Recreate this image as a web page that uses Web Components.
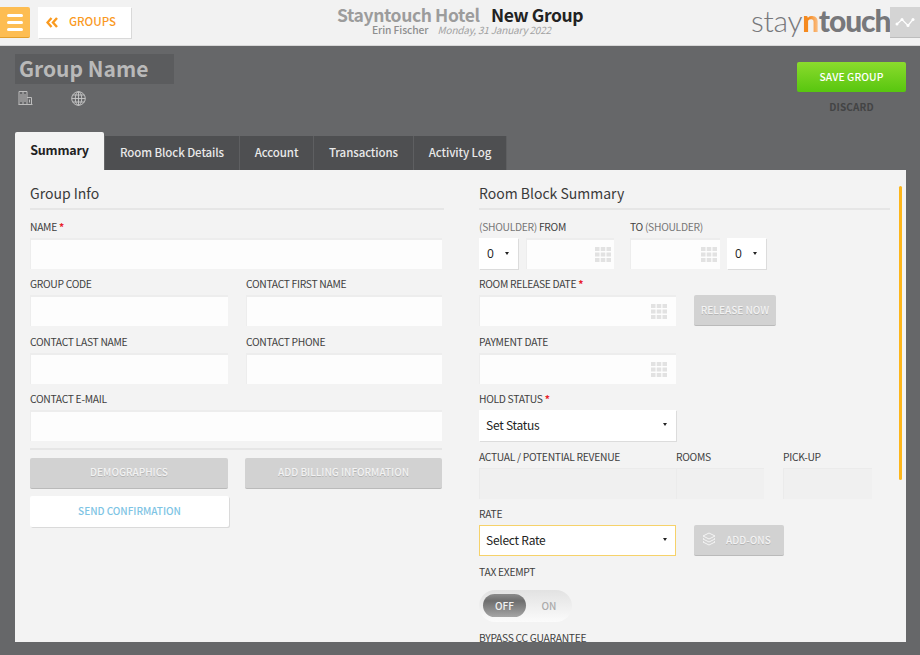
<!DOCTYPE html>
<html>
<head>
<meta charset="utf-8">
<title>New Group</title>
<style>
    html, body { margin: 0; height: 100%; overflow: hidden; }
    body {
        background: #666769;
        font-family: "Noto Sans CJK SC", "Noto Sans", sans-serif;
    }
</style>
</head>
<body>
<sn-header></sn-header>
<sn-group-head></sn-group-head>
<sn-tabs></sn-tabs>
<sn-panel>
    <sn-column slot="left" heading="Group Info">
        <sn-row cols="412px" gap="0">
            <sn-field label="NAME" required><sn-input></sn-input></sn-field>
        </sn-row>
        <sn-row cols="198px 196px" gap="18px">
            <sn-field label="GROUP CODE"><sn-input></sn-input></sn-field>
            <sn-field label="CONTACT FIRST NAME"><sn-input></sn-input></sn-field>
        </sn-row>
        <sn-row cols="198px 196px" gap="18px">
            <sn-field label="CONTACT LAST NAME"><sn-input></sn-input></sn-field>
            <sn-field label="CONTACT PHONE"><sn-input></sn-input></sn-field>
        </sn-row>
        <sn-row cols="412px" gap="0">
            <sn-field label="CONTACT E-MAIL"><sn-input></sn-input></sn-field>
        </sn-row>
        <sn-rule></sn-rule>
        <sn-row cols="198px 197px" gap="17px" class="tight">
            <sn-button kind="disabled">DEMOGRAPHICS</sn-button>
            <sn-button kind="disabled">ADD BILLING INFORMATION</sn-button>
        </sn-row>
        <sn-row cols="199px" gap="0">
            <sn-button kind="blue">SEND CONFIRMATION</sn-button>
        </sn-row>
    </sn-column>
    <sn-column slot="right" heading="Room Block Summary">
        <sn-row cols="127px 1fr" gap="24px">
            <sn-field><span slot="text"><i>(SHOULDER)</i> FROM</span>
                <sn-row cols="39px 88px" gap="8px"><sn-select small>0</sn-select><sn-input date near></sn-input></sn-row>
            </sn-field>
            <sn-field><span slot="text">TO <i>(SHOULDER)</i></span>
                <sn-row cols="90px 39px" gap="7px"><sn-input date near></sn-input><sn-select small>0</sn-select></sn-row>
            </sn-field>
        </sn-row>
        <sn-row cols="197px 82px" gap="18px">
            <sn-field label="ROOM RELEASE DATE" required><sn-input date></sn-input></sn-field>
            <sn-button kind="disabled" class="bottom">RELEASE NOW</sn-button>
        </sn-row>
        <sn-row cols="197px" gap="0">
            <sn-field label="PAYMENT DATE"><sn-input date></sn-input></sn-field>
        </sn-row>
        <sn-row cols="197px" gap="0">
            <sn-field label="HOLD STATUS" required><sn-select>Set Status</sn-select></sn-field>
        </sn-row>
        <sn-row cols="197px 88px 108px" gap="0">
            <sn-field label="ACTUAL / POTENTIAL REVENUE"><sn-input readonly></sn-input></sn-field>
            <sn-field label="ROOMS"><sn-input readonly></sn-input></sn-field>
            <sn-field label="PICK-UP" style="margin-left:19px"><sn-input readonly></sn-input></sn-field>
        </sn-row>
        <sn-row cols="197px 90px" gap="18px">
            <sn-field label="RATE"><sn-select highlight>Select Rate</sn-select></sn-field>
            <sn-button kind="disabled" class="bottom" layers>ADD-ONS</sn-button>
        </sn-row>
        <sn-field label="TAX EXEMPT"><sn-toggle></sn-toggle></sn-field>
        <sn-field label="BYPASS CC GUARANTEE" class="last"></sn-field>
    </sn-column>
</sn-panel>

<script>
const FONT = `"Noto Sans CJK SC", "Noto Sans", sans-serif`;

class SnHeader extends HTMLElement {
    constructor() {
        super();
        this.attachShadow({ mode: 'open' }).innerHTML = `
        <style>
            :host {
                display: flex;
                align-items: flex-start;
                height: 45px;
                background: #f2f2f2;
                border-bottom: 1px solid #d8d8d8;
                position: relative;
                font-family: ${FONT};
            }
            .burger {
                width: 30px; height: 30px; margin-top: 7px;
                background: #fdbd52;
                border-bottom: 1px solid #e39f2a;
                border-radius: 0 2px 2px 0;
                display: flex; flex-direction: column; justify-content: center; align-items: center; gap: 4px;
            }
            .burger span { width: 16px; height: 3px; border-radius: 2px; background: #fff; }
            .back {
                width: 93px; height: 31px; margin: 7px 0 0 8px;
                box-sizing: border-box;
                padding-bottom: 3px;
                background: #fff;
                box-shadow: 1px 1px 0 #d9d9d9;
                display: flex; align-items: center;
                color: #fa9a1f; font-size: 11.500px; font-weight: 500;
            }
            .back svg { margin: 2px 11px 0 8px; }
            .title {
                position: absolute; left: 337px; top: 3px;
                white-space: nowrap;
                line-height: 24px;
                font-size: 17.500px; font-weight: 700;
                color: #9c9c9c;
                letter-spacing: -.4px;
            }
            .title b { color: #222; margin-left: 8px; font-weight: 700; }
            .sub {
                position: absolute; left: 372px; top: 22px;
                white-space: nowrap; line-height: 15px;
                font-size: 10.300px; color: #8e8e8e; font-weight: 500;
                letter-spacing: -.1px;
            }
            .sub i { color: #a2a2a2; font-weight: 400; margin-left: 7px; font-size: 10px; letter-spacing: -.2px; }
            .logo {
                position: absolute; left: 751px; top: 0;
                font-family: "Lato", sans-serif;
                font-size: 30px; line-height: 40px;
                font-weight: 300; color: #77787b;
                white-space: nowrap;
                letter-spacing: -.3px;
            }
            .logo b { font-weight: 900; color: #77787b; letter-spacing: -1.100px; }
            .logo .n {
                font-weight: 900;
                background: linear-gradient(90deg, #f58a1f, #f58a1f 40%, #fbc592);
                -webkit-background-clip: text;
                background-clip: text;
                color: transparent;
            }
            .chart {
                position: absolute; right: 0; top: 7px;
                width: 30px; height: 30px;
                background: #d4d4d4;
                border-bottom: 1px solid #bdbdbd;
                display: flex; align-items: center; justify-content: center;
            }
        </style>
        <div class="burger"><span></span><span></span><span></span></div>
        <div class="back">
            <svg width="12" height="11" viewBox="0 0 12 11"><path d="M5.500 1 1.500 5.500 5.500 10M11 1 7 5.500 11 10" fill="none" stroke="#fa9a1f" stroke-width="2.400"/></svg>
            GROUPS
        </div>
        <div class="title">Stayntouch Hotel <b>New Group</b></div>
        <div class="sub">Erin Fischer <i>Monday, 31 January 2022</i></div>
        <div class="logo">stay<span class="n">n</span><b>touch</b></div>
        <div class="chart">
            <svg width="20" height="11" viewBox="0 0 20 11"><path d="M2 7 7 2.500l6 6 5-6" fill="none" stroke="#fff" stroke-width="1.200"/><g fill="#fff"><circle cx="2" cy="7" r="1.500"/><circle cx="7" cy="2.500" r="1.500"/><circle cx="13" cy="8.500" r="1.500"/><circle cx="18" cy="2.500" r="1.500"/></g></svg>
        </div>`;
    }
}

class SnGroupHead extends HTMLElement {
    constructor() {
        super();
        this.attachShadow({ mode: 'open' }).innerHTML = `
        <style>
            :host {
                display: flex;
                justify-content: space-between;
                height: 86px;
                padding: 8px 14px 0 15px;
                box-sizing: border-box;
                font-family: ${FONT};
            }
            .name {
                width: 159px; height: 30px; box-sizing: border-box;
                background: #5b5c5e;
                color: #b9b9b9;
                font-size: 21px; font-weight: 700; line-height: 29px;
                padding-left: 4px;
                white-space: nowrap;
            }
            .icons { display: flex; gap: 38px; margin: 7px 0 0 3px; }
            .actions { width: 109px; margin-top: 8px; }
            .save {
                height: 30px; border-radius: 2px; box-sizing: border-box;
                padding-bottom: 2px;
                background: linear-gradient(#8bdb2d, #58c60f);
                color: #fff; font-size: 10.300px; font-weight: 500; letter-spacing: .1px;
                display: flex; align-items: center; justify-content: center;
            }
            .discard {
                text-align: center; margin-top: 7px;
                color: #434445; font-size: 10px; font-weight: 700; line-height: 16px; letter-spacing: .1px;
            }
        </style>
        <div>
            <div class="name">Group Name</div>
            <div class="icons">
                <svg width="15" height="14" viewBox="0 0 15 14" fill="none" stroke="#bdbdbd" stroke-width="1"><path d="M.5 13.500h14M1 13.500V.5h8v13M5 .5v13M3 3v8M7 3v8M9 6.500h4.500v7M11.500 8.500v3"/></svg>
                <svg width="15" height="15" viewBox="0 0 15 15" fill="none" stroke="#c8c8c8" stroke-width=".9"><circle cx="7.500" cy="7.500" r="6.800"/><ellipse cx="7.500" cy="7.500" rx="3.200" ry="6.800"/><path d="M7.500.7v13.600M.7 7.500h13.600M1.700 4h11.600M1.700 11h11.600"/></svg>
            </div>
        </div>
        <div class="actions">
            <div class="save">SAVE GROUP</div>
            <div class="discard">DISCARD</div>
        </div>`;
    }
}

class SnTabs extends HTMLElement {
    constructor() {
        super();
        this.attachShadow({ mode: 'open' }).innerHTML = `
        <style>
            :host {
                display: flex;
                align-items: flex-end;
                height: 38px;
                padding-left: 15px;
                font-family: ${FONT};
            }
            div {
                height: 34px; box-sizing: border-box;
                padding-bottom: 2px;
                display: flex; align-items: center; justify-content: center;
                background: #4e4f51;
                color: #e9e9e9;
                font-size: 11.500px; font-weight: 500;
                border-right: 1px solid #5e5f61;
                white-space: nowrap;
                letter-spacing: -.1px;
            }
            .on {
                height: 38px; background: #f3f3f3; color: #222;
                font-size: 12.500px; font-weight: 700;
                border-right: 0;
                border-radius: 2px 2px 0 0;
                padding-bottom: 3px;
                margin-right: 1px;
                letter-spacing: -.2px;
            }
        </style>
        <div class="on" style="width:89px">Summary</div>
        <div style="width:135px">Room Block Details</div>
        <div style="width:74px">Account</div>
        <div style="width:100px">Transactions</div>
        <div style="width:93px">Activity Log</div>`;
    }
}

class SnPanel extends HTMLElement {
    constructor() {
        super();
        this.attachShadow({ mode: 'open' }).innerHTML = `
        <style>
            :host {
                display: grid;
                grid-template-columns: 414px 411px;
                column-gap: 35px;
                width: 891px; height: 472px;
                box-sizing: border-box;
                margin-left: 15px;
                padding: 0 16px 0 15px;
                background: #f3f3f3;
                overflow: hidden;
                position: relative;
                font-family: ${FONT};
            }
            .bar {
                position: absolute; left: 884px; top: 16px;
                width: 3px; height: 294px;
                border-radius: 2px;
                background: #fdb61a;
            }
        </style>
        <slot name="left"></slot>
        <slot name="right"></slot>
        <div class="bar"></div>`;
    }
}

class SnColumn extends HTMLElement {
    constructor() {
        super();
        this.attachShadow({ mode: 'open' }).innerHTML = `
        <style>
            :host { display: block; }
            h2 {
                margin: 0 0 8.500px;
                height: 40px; box-sizing: border-box;
                border-bottom: 2px solid #e6e6e6;
                font-size: 14px; font-weight: 400; color: #3a3a3a;
                line-height: 46px;
            }
            .body { display: flex; flex-direction: column; }
        </style>
        <h2>${this.getAttribute('heading')}</h2>
        <div class="body"><slot></slot></div>`;
    }
}

class SnRow extends HTMLElement {
    constructor() {
        super();
        this.attachShadow({ mode: 'open' }).innerHTML = `
        <style>
            :host {
                display: grid;
                grid-template-columns: ${this.getAttribute('cols')};
                column-gap: ${this.getAttribute('gap')};
            }
            :host(.tight) { margin-bottom: 7.500px; }
        </style>
        <slot></slot>`;
    }
}

class SnField extends HTMLElement {
    constructor() {
        super();
        const req = this.hasAttribute('required') ? '<em>*</em>' : '';
        this.attachShadow({ mode: 'open' }).innerHTML = `
        <style>
            :host { display: block; height: 57.500px; min-width: 0; }
            :host(.last) { height: 20px; margin-top: 9px; }
            .label {
                height: 16px; line-height: 16px; margin-bottom: 3px;
                font-size: 10.300px; color: #3f3f3f; font-weight: 400;
                letter-spacing: -.3px;
                white-space: nowrap;
            }
            em { color: #e8202a; font-style: normal; font-weight: 700; }
        </style>
        <div class="label">${this.getAttribute('label') || ''} ${req}<slot name="text"></slot></div>
        <slot></slot>`;
    }
}

class SnInput extends HTMLElement {
    constructor() {
        super();
        const grid = this.hasAttribute('date')
            ? '<svg width="16" height="15" viewBox="0 0 16 15" fill="#e2e2e2"><rect width="4.500" height="4"/><rect x="5.750" width="4.500" height="4"/><rect x="11.500" width="4.500" height="4"/><rect y="5.500" width="4.500" height="4"/><rect x="5.750" y="5.500" width="4.500" height="4"/><rect x="11.500" y="5.500" width="4.500" height="4"/><rect y="11" width="4.500" height="4"/><rect x="5.750" y="11" width="4.500" height="4"/><rect x="11.500" y="11" width="4.500" height="4"/></svg>'
            : '';
        this.attachShadow({ mode: 'open' }).innerHTML = `
        <style>
            :host {
                display: flex; align-items: center; justify-content: flex-end;
                height: 31px; box-sizing: border-box;
                background: #fdfdfd;
                border-top: 2px solid #ededed;
                border-left: 1px solid #ededed;
                padding-right: 9px;
            }
            :host([near]) { padding-right: 3.500px; }
            :host([readonly]) {
                background: #f0f0f0;
                border-top: 1px solid #ebebeb;
                border-left: 1px solid #ebebeb;
            }
        </style>
        ${grid}`;
    }
}

class SnSelect extends HTMLElement {
    constructor() {
        super();
        this.attachShadow({ mode: 'open' }).innerHTML = `
        <style>
            :host {
                display: flex; align-items: center; justify-content: space-between;
                height: 31px; box-sizing: border-box;
                background: #fff;
                box-shadow: 1px 1px 0 #dcdcdc;
                padding: 0 9px 2px 7px;
                font-size: 12px; color: #222;
                letter-spacing: -.25px;
                white-space: nowrap;
            }
            :host([small]) { padding: 0 9px 0 8px; font-family: "Open Sans", sans-serif; font-size: 12px; letter-spacing: 0; }
            :host([highlight]) {
                border: 1px solid #f6d26a;
                box-shadow: none;
                padding: 0 8px 2px 6px;
            }
            i { width: 0; height: 0; border: 2.500px solid transparent; border-top: 3.500px solid #222; border-bottom: 0; }
        </style>
        <span><slot></slot></span><i></i>`;
    }
}

class SnButton extends HTMLElement {
    constructor() {
        super();
        const layers = this.hasAttribute('layers')
            ? '<svg width="14" height="14" viewBox="0 0 14 14" fill="none" stroke="#f5f5f5" stroke-width="1"><path d="M7 1 13 4 7 7 1 4zM2 6.500 1 7l6 3 6-3-1-.5M2 9.500 1 10l6 3 6-3-1-.5"/></svg>'
            : '';
        this.attachShadow({ mode: 'open' }).innerHTML = `
        <style>
            :host {
                display: flex; align-items: center; justify-content: center;
                height: 31px; box-sizing: border-box;
                padding-bottom: 2px;
                font-size: 10px; font-weight: 500;
                border-radius: 2px;
                white-space: nowrap;
            }
            :host([kind="disabled"]) {
                background: #d2d2d2;
                border-bottom: 1px solid #bababa;
                color: #f3f3f3;
                text-shadow: 0 1px 0 #b5b5b5;
            }
            :host([kind="blue"]) {
                background: #fff;
                color: #7ec4e4;
                box-shadow: 1px 1px 0 #dadada;
            }
            :host(.bottom) { margin-top: 19px; }
            :host([layers]) { justify-content: flex-start; padding-left: 8px; }
            svg { margin-right: 10px; }
        </style>
        ${layers}<slot></slot>`;
    }
}

class SnRule extends HTMLElement {
    constructor() {
        super();
        this.attachShadow({ mode: 'open' }).innerHTML = `
        <style>
            :host { display: block; width: 412px; height: 2px; margin: -.5px 0 7.500px; background: #e6e6e6; }
        </style>`;
    }
}

class SnToggle extends HTMLElement {
    constructor() {
        super();
        this.attachShadow({ mode: 'open' }).innerHTML = `
        <style>
            :host {
                display: flex; align-items: center;
                width: 93px; height: 32px; box-sizing: border-box;
                margin-top: 10px;
                border-radius: 16px;
                background: linear-gradient(#e2e2e2, #fbfbfb);
                padding-left: 4px;
                font-size: 10px; font-weight: 500;
            }
            .off {
                width: 43px; height: 23px; border-radius: 12px;
                background: linear-gradient(#8b8b8b, #6e6e6e 30%, #a5a5a5);
                color: #f2f2f2;
                display: flex; align-items: center; justify-content: center;
            }
            .on { width: 46px; text-align: center; color: #ababab; }
        </style>
        <div class="off">OFF</div><div class="on">ON</div>`;
    }
}

customElements.define('sn-header', SnHeader);
customElements.define('sn-group-head', SnGroupHead);
customElements.define('sn-tabs', SnTabs);
customElements.define('sn-panel', SnPanel);
customElements.define('sn-column', SnColumn);
customElements.define('sn-row', SnRow);
customElements.define('sn-field', SnField);
customElements.define('sn-input', SnInput);
customElements.define('sn-select', SnSelect);
customElements.define('sn-button', SnButton);
customElements.define('sn-rule', SnRule);
customElements.define('sn-toggle', SnToggle);
</script>
<style>
    sn-field i { color: #777; font-style: normal; }
</style>
</body>
</html>
